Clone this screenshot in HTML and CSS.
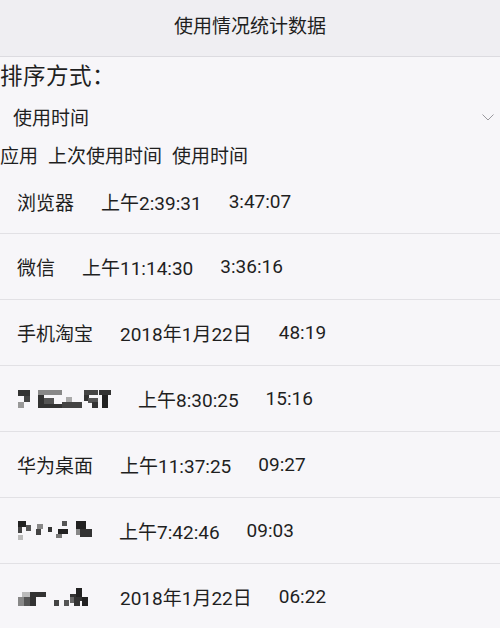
FILE: index.html
```html
<!DOCTYPE html>
<html lang="zh-CN">
<head>
  <meta charset="UTF-8" />
  <meta name="viewport" content="width=device-width, initial-scale=1.0"/>
  <title>使用情况统计数据</title>
  <link rel="stylesheet" href="styles.css">
</head>
<body>
  <header class="titlebar">使用情况统计数据</header>

  <div class="sort-label">排序方式：</div>
  <div class="spinner">
    <span>使用时间</span>
    <svg class="chevron" width="12" height="7" viewBox="0 0 12 7">
      <polyline points="0.5,0.5 6,6 11.5,0.5" fill="none" stroke="#9a999e" stroke-width="1"/>
    </svg>
  </div>
  <div class="columns">
    <span>应用</span>
    <span>上次使用时间</span>
    <span>使用时间</span>
  </div>

  <ul class="list">
    <li class="row">
      <span>浏览器</span><span>上午2:39:31</span><span>3:47:07</span>
    </li>
    <li class="row">
      <span>微信</span><span>上午11:14:30</span><span>3:36:16</span>
    </li>
    <li class="row">
      <span>手机淘宝</span><span>2018年1月22日</span><span>48:19</span>
    </li>
    <li class="row">
      <svg class="blur" width="93" height="18" viewBox="0 0 93 18">
        <rect x="0" y="0" width="12" height="6" fill="#333"/>
        <rect x="6" y="6" width="6" height="6" fill="#444"/>
        <rect x="0" y="12" width="6" height="6" fill="#999"/>
        <rect x="20" y="0" width="24" height="5" fill="#888"/>
        <rect x="20" y="5" width="6" height="13" fill="#333"/>
        <rect x="26" y="8" width="10" height="6" fill="#555"/>
        <rect x="26" y="14" width="18" height="4" fill="#333"/>
        <rect x="48" y="7" width="6" height="5" fill="#aaa"/>
        <rect x="44" y="12" width="20" height="6" fill="#444"/>
        <rect x="66" y="0" width="14" height="5" fill="#444"/>
        <rect x="66" y="5" width="5" height="6" fill="#333"/>
        <rect x="70" y="8" width="10" height="5" fill="#555"/>
        <rect x="74" y="12" width="6" height="6" fill="#333"/>
        <rect x="81" y="0" width="12" height="5" fill="#333"/>
        <rect x="84" y="5" width="6" height="13" fill="#222"/>
      </svg>
      <span>上午8:30:25</span><span>15:16</span>
    </li>
    <li class="row">
      <span>华为桌面</span><span>上午11:37:25</span><span>09:27</span>
    </li>
    <li class="row">
      <svg class="blur" width="74" height="19" viewBox="0 0 74 19">
        <rect x="0" y="0" width="8" height="6" fill="#222"/>
        <rect x="0" y="6" width="4" height="6" fill="#444"/>
        <rect x="8" y="4" width="5" height="6" fill="#555"/>
        <rect x="0" y="14" width="5" height="5" fill="#bbb"/>
        <rect x="19" y="3" width="6" height="5" fill="#888"/>
        <rect x="18" y="8" width="5" height="6" fill="#444"/>
        <rect x="30" y="6" width="4" height="5" fill="#333"/>
        <rect x="44" y="0" width="5" height="5" fill="#555"/>
        <rect x="40" y="8" width="10" height="5" fill="#222"/>
        <rect x="38" y="13" width="6" height="4" fill="#777"/>
        <rect x="58" y="0" width="10" height="8" fill="#222"/>
        <rect x="58" y="8" width="4" height="6" fill="#888"/>
        <rect x="62" y="8" width="12" height="8" fill="#333"/>
      </svg>
      <span>上午7:42:46</span><span>09:03</span>
    </li>
    <li class="row">
      <svg class="blur" width="75" height="18" viewBox="0 0 75 18">
        <rect x="4" y="4" width="16" height="5" fill="#bbb"/>
        <rect x="0" y="9" width="6" height="9" fill="#888"/>
        <rect x="6" y="9" width="6" height="9" fill="#555"/>
        <rect x="12" y="4" width="6" height="14" fill="#333"/>
        <rect x="18" y="4" width="10" height="5" fill="#333"/>
        <rect x="36" y="12" width="5" height="6" fill="#444"/>
        <rect x="46" y="12" width="5" height="6" fill="#555"/>
        <rect x="52" y="9" width="4" height="6" fill="#666"/>
        <rect x="52" y="6" width="6" height="3" fill="#333"/>
        <rect x="56" y="9" width="6" height="9" fill="#333"/>
        <rect x="58" y="0" width="6" height="12" fill="#222"/>
        <rect x="58" y="9" width="12" height="4" fill="#333"/>
        <rect x="64" y="9" width="6" height="9" fill="#222"/>
      </svg>
      <span>2018年1月22日</span><span>06:22</span>
    </li>
  </ul>
</body>
</html>
```

FILE: styles.css
```css
body {
  margin: 0;
  background: #f7f6f9;
  color: #1f1f1f;
  font-family: Roboto, "Noto Sans CJK SC", sans-serif;
  font-size: 19px;
  overflow: hidden;
}

.titlebar {
  height: 56px;
  line-height: 54px;
  text-align: center;
  background: #efeef2;
  border-bottom: 1px solid #dcdbe0;
  font-size: 19px;
  color: #1e1e1e;
}

.sort-label {
  font-size: 22.5px;
  line-height: 34px;
  margin-top: 2px;
  letter-spacing: 0.5px;
}

.spinner {
  display: flex;
  align-items: center;
  justify-content: space-between;
  height: 46px;
  padding: 0 6px 0 13px;
}

.chevron {
  display: block;
  margin-top: 2px;
}

.columns {
  display: flex;
  gap: 10px;
  line-height: 26px;
  padding-top: 5px;
}

.list {
  list-style: none;
  margin: 0;
  padding: 0;
}

.row {
  display: flex;
  align-items: center;
  gap: 27px;
  height: 65px;
  padding-left: 17px;
  border-bottom: 1px solid #e2e1e5;
}

.row:first-child {
  height: 63px;
}

.blur {
  display: block;
  flex: none;
  margin-left: 1px;
}
```
